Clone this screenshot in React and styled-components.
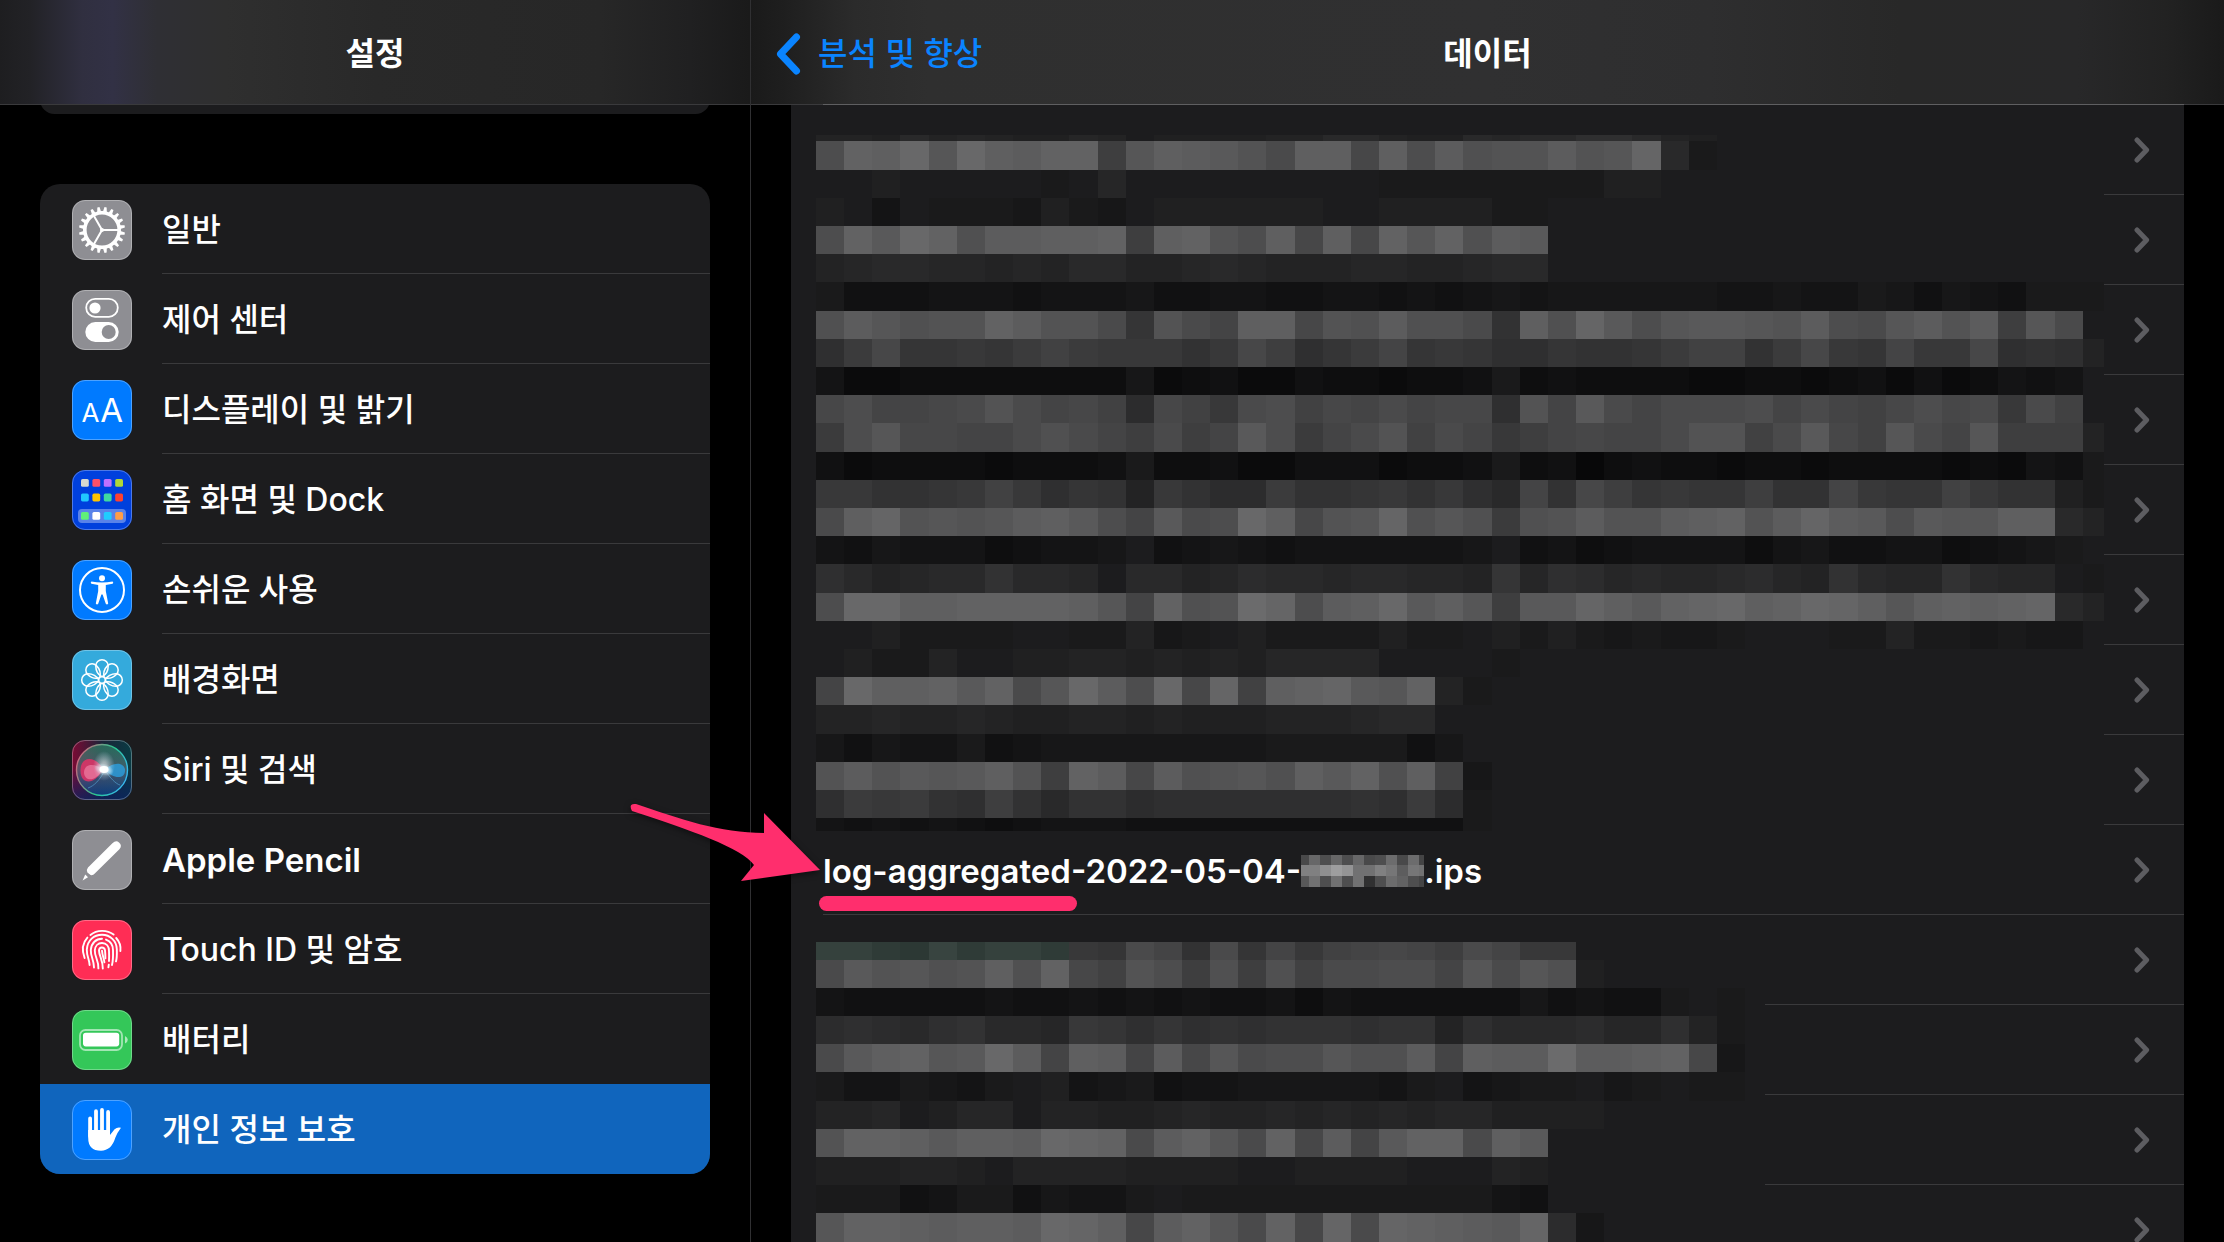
import React from 'react';
import styled, {createGlobalStyle} from 'styled-components';

const colors = {
    card: '#1c1c1e',
    line: '#3a3a3c',
    accent: '#0a84ff',
    selected: '#1065bd',
    marker: '#ff2e6d',
    gray: '#8e8e93'
};

const menuItems = [
    {label: '일반', icon: 'gear', tile: colors.gray},
    {label: '제어 센터', icon: 'control', tile: colors.gray},
    {label: '디스플레이 및 밝기', icon: 'display', tile: '#007aff'},
    {label: '홈 화면 및 Dock', icon: 'dock', tile: '#0040dd'},
    {label: '손쉬운 사용', icon: 'accessibility', tile: '#007aff'},
    {label: '배경화면', icon: 'wallpaper', tile: '#34aadc'},
    {label: 'Siri 및 검색', icon: 'siri', tile: '#10202c'},
    {label: 'Apple Pencil', icon: 'pencil', tile: colors.gray, latin: true},
    {label: 'Touch ID 및 암호', icon: 'touch', tile: '#ff2d55'},
    {label: '배터리', icon: 'battery', tile: '#34c759'},
    {label: '개인 정보 보호', icon: 'hand', tile: '#007aff', selected: true}
];

// One base-36 digit per cell, from dark to bright
const upperMosaic = [
    '998b9a988a97888899bb988babbddb98',
    'nutwqwtsuuiqtsrpmttltnsoppspqvb6',
    '7787777767a77777777766666666887',
    '87476665865788888877888866',
    'nurwuossttuitupntltluquosr',
    '9abbaa9a9bb99aba999aa99abb',
    '6333444344453344334434345455555544544653543666',
    'osqoppusppmfpmkttlposoometovrnqrrqpsnmqspsiqm7',
    'dhlffgfhjhgggeglidfhkfgfddfeefhjjehlgfkgglded9',
    '4112222222251231132212236232222112212313124347',
    'lnkklmpmkljcljgmnjlkmklldpkrmkmmmnkmkjlnlmgmj7',
    'hnqllkkmomkimikrnhkmpjmkgiklkkmppjmrljqmkqiii9',
    '3122221222362231133312236230232212212222121436',
    'ggeefgjgdfe9geccheefgegdbkelifgffieekgffjgee86',
    'mtvpqpqstrnkrmnwtlpqvoqohopsppstupsvsrnrqqttb9',
    '4354442344573454344444457342344442453344234567',
    'db9abbebba7bb9acbbabbaa9fadcabaabca9ebaaebaa76',
    'nwwttuuuutqkuopxvnstwrtqirrvtruvwtuwvtqtutuvb9',
    '7786666776695678666686678686565567776696656557877',
    '7866977889989898aaaa77776',
    'kwtturumqwsnwlvjtuvrqu96',
    '99a99a9889989888999abb7',
    '535446345555555566666357',
    'psprqrtpiuslsopqotruotj5',
    'dhghediebeecdddddddedhc6',
    '434343234443333333333336'
];

const lowerMosaic = [
    'hhfeifhhfgfmkemfkgjklkimkgg7',
    'mrpqoptouljpnioiojmmnnkqmqo8',
    '433333433434343342433333353433676',
    'cdcbdebbagfdfdedeeedee9dbbbcaad96',
    'mrtuqrwsktskslqmnnqoosktssxsstul5',
    '644654678456344555554674566756766',
    '99a78aa799889a99a9a9a9aa88887',
    'puutrttswvumsuqmulskruumtr7',
    '88899879999888877888877798',
    '66634663544676666666666643',
    'quutsttswvtlsuqmulvmvutsrvc5'
];

const codeMosaic = [
    'djejejdekdkc',
    'oorusllomhml',
    'glelel8ekiec'
];

const shade = (char, step) => {
    const v = 8 + parseInt(char, 36) * step;
    return `rgb(${v}, ${v}, ${v + 1})`;
};

const greenShade = (char) => {
    const v = 8 + parseInt(char, 36) * 3;
    return `rgb(${v - 6}, ${v + 6}, ${v + 2})`;
};

const Mosaic = ({rows, width, height, cell, rowHeight = cell, firstRow, firstCell = cell, step = 3, tinted = 0, className}) => (
    <svg className={className} viewBox={`0 0 ${width} ${height}`} preserveAspectRatio='none' shapeRendering='crispEdges' aria-hidden='true'>
        <rect width={width} height={height} fill={colors.card} />
        {rows.map((row, r) => {
            const y = r === 0 ? 0 : Math.round(firstRow + (r - 1) * rowHeight);
            const bottom = Math.min(height, Math.round(firstRow + r * rowHeight));
            return row.split('').map((char, c) => {
                const x = c === 0 ? 0 : firstCell + (c - 1) * cell;
                const right = Math.min(width, firstCell + c * cell);
                if (char === '7' || right <= x) {
                    return null;
                }
                const green = r === 0 && c < tinted;
                return (
                    <rect
                        key={`${r}-${c}`}
                        x={x}
                        y={y}
                        width={right - x}
                        height={bottom - y}
                        fill={green ? greenShade(char) : shade(char, step)}
                    />
                );
            });
        })}
    </svg>
);

const GearIcon = () => (
    <>
        <circle cx='30' cy='30' r='17.2' fill='none' stroke='#fff' strokeWidth='3.6' />
        {Array.from({length: 20}, (_, i) => (
            <path key={i} d='M27.9 12.5 L28.9 7 H31.1 L32.1 12.5 Z' fill='#fff' transform={`rotate(${i * 18 + 9} 30 30)`} />
        ))}
        <path d='M30 30 H46 M30 30 L22 16 M30 30 L22 44' stroke='#fff' strokeWidth='2' />
        <circle cx='30' cy='30' r='2' fill='#fff' />
    </>
);

const ControlIcon = () => (
    <>
        <rect x='14.2' y='8.8' width='31.6' height='18' rx='9' fill='none' stroke='#fff' strokeWidth='1.8' />
        <circle cx='23' cy='18' r='5.6' fill='#fff' />
        <rect x='13.3' y='32' width='33.4' height='20' rx='10' fill='#fff' />
        <circle cx='36.7' cy='42' r='7' fill={colors.gray} />
    </>
);

const DisplayIcon = () => (
    <g fill='#fff' fontFamily='Inter, sans-serif' fontWeight='400' textAnchor='middle'>
        <text x='18.4' y='42' fontSize='26'>A</text>
        <text x='39.6' y='42' fontSize='33'>A</text>
    </g>
);

const dockDots = [
    ['#d8d8d0', '#ff5068', '#bf70ff', '#b0d838'],
    ['#20c8ff', '#ffc400', '#40d8a0', '#ff4030'],
    ['#60f078', '#ffffff', '#20ccff', '#ff9d48']
];

const DockIcon = () => (
    <>
        <rect x='6' y='39' width='48' height='14' rx='4' fill='#fff' fillOpacity='0.35' />
        {dockDots.map((row, r) => row.map((fill, c) => (
            <rect key={fill} x={9 + c * 11.4} y={[9, 23.6, 42][r]} width='7.8' height='7.8' rx='1.6' fill={fill} />
        )))}
    </>
);

const AccessibilityIcon = () => (
    <>
        <circle cx='30' cy='30' r='22' fill='none' stroke='#fff' strokeWidth='2' />
        <circle cx='30' cy='18.3' r='3' fill='#fff' />
        <path
            fill='#fff'
            d='M19.4 21.6 Q30 23.6 40.6 21.6 Q42 22.8 40.6 23.8 L33.8 25 V31 L36.2 43.4 Q35.2 45.2 33.8 43.8 L30.6 34.4 H29.4 L26.2 43.8 Q24.8 45.2 23.8 43.4 L26.2 31 V25 L19.4 23.8 Q18 22.8 19.4 21.6 Z'
        />
    </>
);

const WallpaperIcon = () => (
    <g fill='none' stroke='#fff' strokeWidth='1.5'>
        <circle cx='30' cy='30' r='3.4' />
        {Array.from({length: 8}, (_, i) => (
            <path
                key={i}
                d='M30 26.8 C26 24.6 23.8 20.6 23.8 15.9 A6.2 6.2 0 0 1 36.2 15.9 C36.2 20.6 34 24.6 30 26.8 Z'
                transform={`rotate(${i * 45} 30 30)`}
            />
        ))}
    </g>
);

const SiriIcon = () => (
    <>
        <defs>
            <linearGradient id='siriBase' x1='0' y1='0' x2='1' y2='0'>
                <stop offset='0' stopColor='#7c0a34' />
                <stop offset='0.5' stopColor='#1c2338' />
                <stop offset='1' stopColor='#083c44' />
            </linearGradient>
            <linearGradient id='siriFade' x1='0' y1='0' x2='0' y2='1'>
                <stop offset='0.45' stopColor='#0b1c60' stopOpacity='0' />
                <stop offset='1' stopColor='#0b2260' stopOpacity='0.8' />
            </linearGradient>
            <linearGradient id='siriRing' x1='0' y1='0.2' x2='1' y2='0.6'>
                <stop offset='0' stopColor='#d8607c' />
                <stop offset='0.6' stopColor='#28c890' />
                <stop offset='1' stopColor='#38b8f0' />
            </linearGradient>
            <radialGradient id='siriGlow'>
                <stop offset='0' stopColor='#fff' />
                <stop offset='0.25' stopColor='#fff' stopOpacity='0.85' />
                <stop offset='1' stopColor='#c8f0ff' stopOpacity='0' />
            </radialGradient>
            <linearGradient id='siriOrb' x1='0' y1='0' x2='0' y2='1'>
                <stop offset='0' stopColor='#2f8f6c' />
                <stop offset='0.5' stopColor='#5f6f80' />
                <stop offset='1' stopColor='#0c4a90' />
            </linearGradient>
        </defs>
        <rect width='60' height='60' rx='13' fill='url(#siriBase)' />
        <rect width='60' height='60' rx='13' fill='url(#siriFade)' />
        <circle cx='30' cy='30' r='25.5' fill='url(#siriOrb)' fillOpacity='0.65' stroke='url(#siriRing)' strokeWidth='1.4' />
        <path d='M31 29 C24 16 9 15 8.5 30 C8 44 22 47 31 29 Z' fill='#ec2f68' fillOpacity='0.8' />
        <path d='M31 29 C24 24 12 22 12 33 C13 42 24 42 31 29 Z' fill='#f593b4' fillOpacity='0.55' />
        <path d='M33 30 C38 24 50 20 53 29 C54 39 42 40 33 30 Z' fill='#2aa4e8' fillOpacity='0.75' />
        <path d='M33 30 C28 40 22 46 16 48 M33 30 C38 38 44 44 48 45' stroke='#58a8d8' strokeOpacity='0.6' fill='none' />
        <ellipse cx='32' cy='26' rx='11' ry='15' fill='url(#siriGlow)' fillOpacity='0.6' />
        <ellipse cx='32' cy='29.5' rx='10' ry='6' fill='url(#siriGlow)' transform='rotate(18 32 29.5)' />
        <ellipse cx='32' cy='29.5' rx='4.5' ry='3.4' fill='#fff' />
    </>
);

const PencilIcon = () => (
    <g fill='#fff'>
        <path d='M40.4 13.2 Q44 10 47 12.4 Q50.6 15.6 47.4 19.2 L22.8 43.6 Q21 45.6 18.6 45 L15.4 42.4 Q14 40 16 37.6 Z' />
        <path d='M13.2 44.6 L16 47.2 L10.6 50.4 Z' />
    </g>
);

const TouchIcon = () => (
    <g fill='none' stroke='#fff' strokeWidth='1.9' strokeLinecap='round'>
        <path d='M18.4 15 C25 9.6 35 9.6 41.6 14.6' />
        <path d='M12.6 38 C10 31 10.4 23 15.4 17.6' />
        <path d='M44.2 18 C47.4 21.6 49 26 48.4 31' />
        <path d='M17.6 45 C17.6 40 14.6 36 14.8 29.6 C15.4 20 22 14.8 30 14.8 C38.4 14.8 44.4 21 44.8 29 C45 34 45 38 44 41.4' />
        <path d='M22 47.6 C22 40 18.6 37 18.8 30 C19.4 23 24 18.8 30 18.8' />
        <path d='M34 19.6 C38.6 21.4 41 25.4 41 30 C41.2 36 41 41 40 45' />
        <path d='M26.4 48.4 C26.6 40 22.6 37 22.8 30.4 C23 26 26 23 30 23 C34.6 23 37 26.6 37 31 C37.2 35 37.2 37 37 41' />
        <path d='M30.8 48.6 C31 40 27 36 27 30.4 C27.4 26.4 32.4 26.6 33 30.4 C33.4 34 33.4 36 33.4 38.4' />
        <path d='M30 30.6 C30.4 36 32 38 32.4 42.4' />
        <path d='M36.8 44.6 L36.4 47.4' />
    </g>
);

const BatteryIcon = () => (
    <>
        <rect x='8' y='20' width='42' height='20' rx='5.4' fill='none' stroke='#fff' strokeOpacity='0.55' strokeWidth='1.8' />
        <rect x='11' y='22.8' width='36.2' height='13.6' rx='2.8' fill='#fff' />
        <path d='M53 26 Q55.8 27.4 55.8 29.8 Q55.8 32.2 53 33.6 Z' fill='#fff' fillOpacity='0.6' />
    </>
);

const HandIcon = () => (
    <>
        <path d='M18.1 18.4 V36 M24 11.2 V32 M30 10 V32 M36.1 12 V34' stroke='#fff' strokeWidth='3.8' strokeLinecap='round' />
        <path d='M16.2 30 H38 V35 L42.6 29.2 Q45.4 26.8 49 27.8 Q45.4 32.4 43.4 37.6 Q39.4 50.8 29 50.8 Q16.2 50.6 16.2 38 Z' fill='#fff' />
    </>
);

const icons = {
    gear: GearIcon,
    control: ControlIcon,
    display: DisplayIcon,
    dock: DockIcon,
    accessibility: AccessibilityIcon,
    wallpaper: WallpaperIcon,
    siri: SiriIcon,
    pencil: PencilIcon,
    touch: TouchIcon,
    battery: BatteryIcon,
    hand: HandIcon
};

const MenuItem = ({label, icon, tile, selected, latin, last}) => {
    const Icon = icons[icon];

    return (
        <li>
            <MenuLink href='#' $selected={selected} aria-current={selected ? 'page' : undefined}>
                <Tile viewBox='0 0 60 60' aria-hidden='true'>
                    <rect width='60' height='60' rx='13' fill={tile} />
                    <Icon />
                    <rect x='0.5' y='0.5' width='59' height='59' rx='12.5' fill='none' stroke='#fff' strokeOpacity='0.3' />
                </Tile>
                <MenuLabel $line={!last && !selected} $latin={latin}>{label}</MenuLabel>
            </MenuLink>
        </li>
    );
};

const Chevron = () => (
    <ChevronSvg viewBox='0 0 16 26' aria-hidden='true'>
        <path d='M3 3 L12.6 13 L3 23' fill='none' stroke='#5d5d61' strokeWidth='5' strokeLinecap='round' strokeLinejoin='round' />
    </ChevronSvg>
);

const HiddenRow = () => (
    <FileRow href='#' aria-label='로그 파일'>
        <FileName />
        <Chevron />
    </FileRow>
);

export default function App() {
    return (
        <>
            <GlobalStyle />
            <Layout>
                <Sidebar>
                    <SidebarHeader>
                        <Title>설정</Title>
                    </SidebarHeader>
                    <PreviousCard />
                    <MenuCard>
                        {menuItems.map((item, i) => (
                            <MenuItem key={item.label} {...item} last={i >= menuItems.length - 2} />
                        ))}
                    </MenuCard>
                </Sidebar>
                <Detail>
                    <DetailHeader>
                        <BackButton type='button'>
                            <BackIcon viewBox='0 0 26 42' aria-hidden='true'>
                                <path d='M20.5 4 L4.5 21 L20.5 38' fill='none' stroke='currentColor' strokeWidth='7' strokeLinecap='round' strokeLinejoin='round' />
                            </BackIcon>
                            분석 및 향상
                        </BackButton>
                        <Title>데이터</Title>
                        <HeaderLine />
                    </DetailHeader>
                    <FileList>
                        <FileGroup>
                            {Array.from({length: 8}, (_, i) => <HiddenRow key={i} />)}
                            <UpperMosaic rows={upperMosaic} width={1288} height={696} cell={28.15} rowHeight={28.2} firstRow={6.4} />
                        </FileGroup>
                        <FileRow href='#'>
                            <FileName>
                                <Underlined>log-aggregated</Underlined>
                                -2022-05-04-
                                <CodeMosaic rows={codeMosaic} width={123} height={32} cell={11} firstRow={10} firstCell={8} step={5} />
                                .ips
                            </FileName>
                            <Chevron />
                            <Arrow viewBox='0 0 194 82' aria-hidden='true'>
                                <path d='M8 2 C52 17 92 31 136 31 L136 11 L192 68 L113 79 L126 63 C114 46 62 28 4 9 Q0 1 8 2 Z' fill={colors.marker} />
                            </Arrow>
                        </FileRow>
                        <FileGroup>
                            {Array.from({length: 4}, (_, i) => <HiddenRow key={i} />)}
                            <LowerMosaic rows={lowerMosaic} width={949} height={300} cell={28.15} rowHeight={28.2} firstRow={17.5} tinted={9} />
                        </FileGroup>
                    </FileList>
                </Detail>
            </Layout>
        </>
    );
}

const GlobalStyle = createGlobalStyle`
    body {
        margin: 0;
        background: #000;
        color: #fff;
        font-family: Inter, 'Noto Sans CJK KR', sans-serif;
        font-size: 32px;
        font-weight: 500;
        line-height: 48px;
    }

    *, *::before, *::after {
        box-sizing: border-box;
    }

    a {
        color: inherit;
        text-decoration: none;
    }
`;

const Layout = styled.div`
    display: grid;
    grid-template-columns: minmax(420px, 750px) minmax(0, 2fr);
    height: 100vh;
    overflow: hidden;
`;

const Sidebar = styled.nav`
    min-width: 0;
`;

const Header = styled.header`
    position: relative;
    z-index: 1;
    display: grid;
    align-items: center;
    height: 105px;
    padding-top: 4px;
    border-bottom: 1px solid ${colors.line};
`;

const SidebarHeader = styled(Header)`
    justify-content: center;
    background: linear-gradient(90deg, #1e1e20 0, #222226 4%, #302f40 11%, #323145 15%, #2f2f34 21%, #2f2f2f 30%, #292929 50%, #272727 80%, #202021 92%, #1a1a1a 100%);
`;

const DetailHeader = styled(Header)`
    grid-template-columns: 1fr auto 1fr;
    background: linear-gradient(90deg, #1a1a1a 0, #1e1e1e 2%, #2b2b2b 7%, #2f2f2f 12%, #303031 50%, #2e2e2f 65%, #282828 78%, #282829 90%, #222 96%, #1a1a1a 100%);
`;

// Row separator that shows through the bar
const HeaderLine = styled.span`
    position: absolute;
    left: 72px;
    right: 40px;
    bottom: -1px;
    height: 1px;
    background: #5f5f61;
`;

const Title = styled.h1`
    margin: 0;
    font-size: 32px;
    font-weight: 700;
    line-height: 48px;
`;

const BackButton = styled.button`
    display: flex;
    align-items: center;
    justify-self: start;
    gap: 16px;
    padding: 0 0 0 25px;
    border: 0;
    background: none;
    color: ${colors.accent};
    font: inherit;
`;

const BackIcon = styled.svg`
    width: 26px;
    height: 42px;
`;

const PreviousCard = styled.div`
    height: 29px;
    margin: -20px 40px 70px;
    border-radius: 20px;
    background: ${colors.card};
`;

const MenuCard = styled.ul`
    margin: 0 40px;
    padding: 0;
    border-radius: 20px;
    background: ${colors.card};
    list-style: none;
    overflow: hidden;
`;

const MenuLink = styled.a`
    display: flex;
    align-items: center;
    gap: 30px;
    height: 90px;
    padding-left: 32px;
    background: ${props => props.$selected ? colors.selected : 'transparent'};
`;

const Tile = styled.svg`
    flex: none;
    width: 60px;
    height: 60px;
    margin-top: 2px;
`;

const MenuLabel = styled.span`
    display: flex;
    align-items: center;
    flex: 1;
    height: 90px;
    padding-top: 3px;
    border-bottom: 1px solid ${props => props.$line ? colors.line : 'transparent'};
    font-size: ${props => props.$latin ? '33px' : '32px'};
    font-weight: ${props => props.$latin ? 600 : 500};
    white-space: nowrap;
`;

const Detail = styled.main`
    min-width: 0;
    border-left: 1px solid #303032;
`;

const FileList = styled.div`
    margin: 0 40px;
    background: ${colors.card};
`;

const FileGroup = styled.div`
    position: relative;
`;

const FileRow = styled.a`
    position: relative;
    display: flex;
    align-items: center;
    height: 90px;
    margin-left: 32px;
    padding-right: 34px;
    border-bottom: 1px solid ${colors.line};
`;

const FileName = styled.span`
    display: flex;
    align-items: center;
    flex: 1;
    padding-top: 2px;
    font-size: 33px;
    font-weight: 600;
    white-space: nowrap;
`;

const Underlined = styled.span`
    position: relative;

    &::after {
        content: '';
        position: absolute;
        left: -4px;
        right: -6px;
        top: 49px;
        height: 15px;
        border-radius: 8px;
        background: ${colors.marker};
    }
`;

const ChevronSvg = styled.svg`
    flex: none;
    width: 16px;
    height: 26px;
`;

const UpperMosaic = styled(Mosaic)`
    position: absolute;
    top: 30px;
    left: 25px;
    width: calc(100% - 105px);
    height: 696px;
`;

const LowerMosaic = styled(Mosaic)`
    position: absolute;
    top: 27px;
    left: 25px;
    width: calc(100% - 444px);
    height: 300px;
`;

const CodeMosaic = styled(Mosaic)`
    width: 123px;
    height: 32px;
`;

const Arrow = styled.svg`
    position: absolute;
    top: -23px;
    left: -195px;
    width: 194px;
    height: 82px;
    filter: drop-shadow(0 2px 3px rgba(0, 0, 0, 0.5));
`;
